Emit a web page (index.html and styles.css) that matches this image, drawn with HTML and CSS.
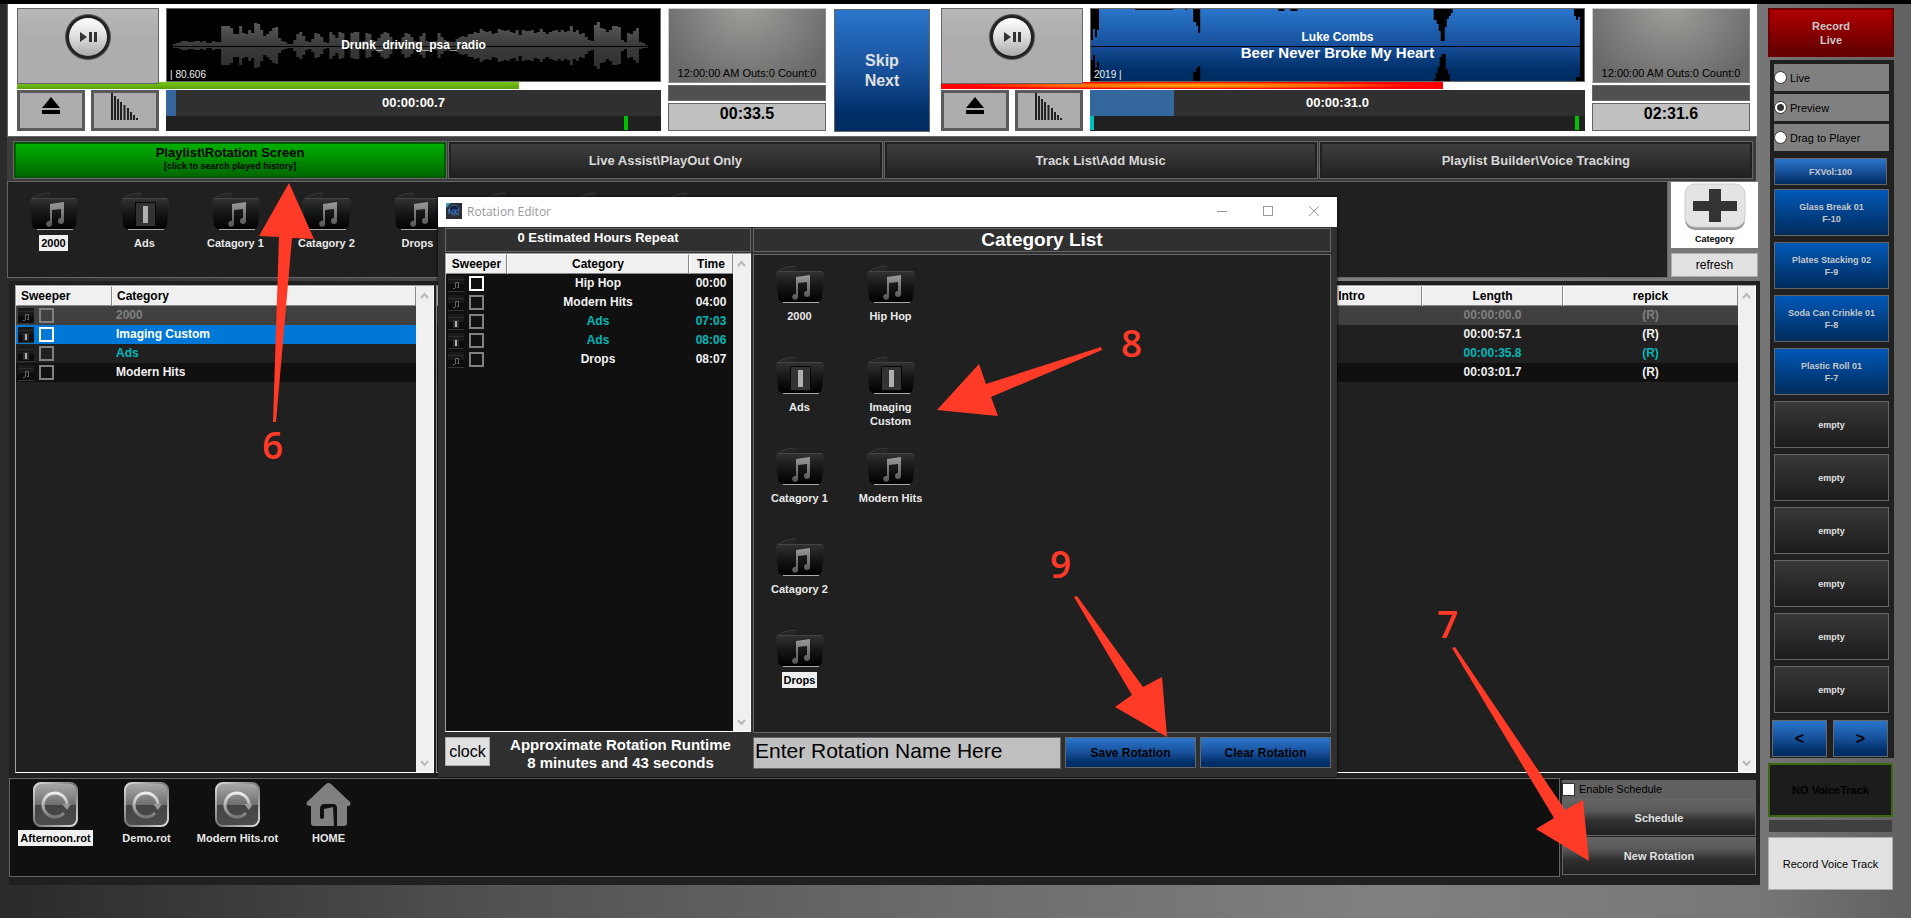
FILE: index.html
```html
<!DOCTYPE html>
<html lang="en">
<head>
  <meta charset="UTF-8" />
  <meta name="viewport" content="width=device-width, initial-scale=1.0"/>
  <title>Radio Automation</title>
  <link rel="stylesheet" href="styles.css">
</head>
<body>
  <!-- shared icons -->
  <svg class="defs" width="0" height="0">
    <defs>
      <linearGradient id="gFolder" x1="0" y1="0" x2="0" y2="1">
        <stop offset="0" stop-color="#333"/><stop offset=".45" stop-color="#17181a"/><stop offset="1" stop-color="#000"/>
      </linearGradient>
      <linearGradient id="gNote" x1="0" y1="0" x2="0" y2="1">
        <stop offset="0" stop-color="#999"/><stop offset="1" stop-color="#555"/>
      </linearGradient>
      <linearGradient id="gKnob" x1="0" y1="0" x2="0" y2="1">
        <stop offset="0" stop-color="#fff"/><stop offset=".5" stop-color="#ddd"/><stop offset="1" stop-color="#aaa"/>
      </linearGradient>
      <linearGradient id="gTile" x1="0" y1="0" x2="0" y2="1">
        <stop offset="0" stop-color="#aaa"/><stop offset=".5" stop-color="#707070"/><stop offset=".52" stop-color="#444"/><stop offset="1" stop-color="#4c4c4c"/>
      </linearGradient>
      <linearGradient id="gRim" x1="0" y1="0" x2="1" y2="1">
        <stop offset="0" stop-color="#ddd"/><stop offset=".5" stop-color="#777"/><stop offset="1" stop-color="#ddd"/>
      </linearGradient>
      <linearGradient id="gArc" x1="0" y1="0" x2="0" y2="1">
        <stop offset="0" stop-color="#eee"/><stop offset="1" stop-color="#777"/>
      </linearGradient>
      <linearGradient id="gBlue" x1="0" y1="0" x2="0" y2="1">
        <stop offset="0" stop-color="#2a76cc"/><stop offset=".5" stop-color="#17509a"/><stop offset=".85" stop-color="#002f68"/><stop offset="1" stop-color="#002c60"/>
      </linearGradient>
      <linearGradient id="gWave" x1="0" y1="0" x2="0" y2="1">
        <stop offset="0" stop-color="#5c5c5c"/><stop offset=".5" stop-color="#3a3a3a"/><stop offset="1" stop-color="#303030"/>
      </linearGradient>
    </defs>
    <symbol id="folder" viewBox="0 0 48 40">
      <path d="M1 9Q6 3 18 2L21 2L20 6L46 6L46 10L1 12Z" fill="#262626"/>
      <path d="M1 7Q7 2 19 1L20 2" fill="none" stroke="#3c3c3c"/>
      <path d="M0 10Q0 6 4 6L44 6Q48 6 48 10L46 33Q45 37 41 37L7 37Q3 37 2 33Z" fill="url(#gFolder)"/>
      <path d="M2 6.500L46 6.500" stroke="#444"/>
      <path d="M7 37.500L43 37.500" stroke="#aaa"/>
    </symbol>
    <symbol id="music" viewBox="0 0 48 40">
      <use href="#folder"/>
      <path d="M20 12L34 10L34 29A3 3 0 1 1 31 26L31 17L22 18L22 31A3 3 0 1 1 20 29Z" fill="url(#gNote)"/>
    </symbol>
    <symbol id="imaging" viewBox="0 0 48 40">
      <use href="#folder"/>
      <rect x="14.500" y="10.500" width="20" height="24" fill="#333" stroke="#080808"/>
      <rect x="22" y="14" width="5" height="17" fill="#b0b0b0"/>
    </symbol>
    <symbol id="mini-music" viewBox="0 0 16 16">
      <rect width="16" height="16" fill="#1a1a1a"/><rect y="3" width="16" height="1" fill="#2c2c2c"/>
      <rect y="8" width="16" height="7" fill="#0c0c0c"/>
      <path d="M7.500 12V6.500H10.500V11" fill="none" stroke="#666"/><rect x="5" y="12" width="2" height="1" fill="#666"/><rect x="9" y="11" width="2" height="1" fill="#666"/>
      <rect y="15" width="16" height="1" fill="#333"/>
    </symbol>
    <symbol id="mini-imaging" viewBox="0 0 16 16">
      <rect width="16" height="16" fill="#1a1a1a"/><rect y="3" width="16" height="1" fill="#2c2c2c"/>
      <rect y="8" width="16" height="7" fill="#0c0c0c"/>
      <rect x="5" y="6" width="6" height="8" fill="#2c2c2c"/><rect x="7" y="7" width="2" height="6" fill="#aaa"/>
      <rect y="15" width="16" height="1" fill="#333"/>
    </symbol>
    <symbol id="rotate" viewBox="0 0 45 45">
      <rect x="1" y="1" width="43" height="43" rx="7" fill="url(#gTile)" stroke="url(#gRim)" stroke-width="2"/>
      <path d="M31 31A12 12 0 1 1 34 22" fill="none" stroke="url(#gArc)" stroke-width="3"/>
      <path d="M29 22L38 22L34 28Z" fill="#999"/>
    </symbol>
    <symbol id="home" viewBox="0 0 45 45">
      <path d="M22.500 1Q24 1 25 2L44 20Q46 24 41 24L41 41Q41 44 38 44L31 44L31 26Q31 22 27 22L19 22Q14 22 14 27L14 35Q14 37 16 37Q18 37 18 35L18 27L27 25L28 44L8 44Q5 44 5 41L5 24Q-1 24 1 20L20 2Q21 1 22.500 1Z" fill="#808080"/>
    </symbol>
    <symbol id="playpause" viewBox="0 0 48 48">
      <circle cx="24" cy="24" r="23" fill="#555"/>
      <circle cx="24" cy="24" r="22" fill="#222"/>
      <circle cx="24" cy="24" r="19" fill="url(#gKnob)"/>
      <path d="M16 19L23 24L16 29ZM25 19H28V29H25ZM30 19H33V29H30Z" fill="#333"/>
    </symbol>
    <symbol id="eject" viewBox="0 0 20 20">
      <path d="M10 1L19 12H1ZM1 14H19V18H1Z" fill="#000"/>
    </symbol>
    <symbol id="fade" viewBox="0 0 28 28">
      <path d="M1 0V27M4 3V27M7 6V27M10 9V27M13.500 12V27M17 15V27M20 19V27M23 22V27M26 25V27" stroke="#222" stroke-width="2"/>
    </symbol>
    <symbol id="up" viewBox="0 0 9 7"><path d="M1 6L4.500 2L8 6" fill="none" stroke="#b8b8b8" stroke-width="2"/></symbol>
    <symbol id="down" viewBox="0 0 9 7"><path d="M1 1L4.500 5L8 1" fill="none" stroke="#b8b8b8" stroke-width="2"/></symbol>
  </svg>

  <div class="app">
    <main class="main">
      <header class="decks">
        <section class="deck">
          <button class="play" aria-label="Play"><svg width="48" height="48"><use href="#playpause"/></svg></button>
          <div class="wave">
            <svg id="wave1" width="100%" height="72" viewBox="0 0 492 72" preserveAspectRatio="none"></svg>
            <div class="wave-text"><span class="artist">Drunk_driving_psa_radio</span></div>
            <span class="tag">| 80.606</span>
          </div>
          <div class="level green"></div>
          <div class="deck-buttons">
            <button class="small" aria-label="Eject"><svg width="20" height="20"><use href="#eject"/></svg></button>
            <button class="small fade" aria-label="Fade"><svg width="28" height="28"><use href="#fade"/></svg></button>
          </div>
          <div class="progress">
            <div class="position"><div class="fill" style="width: 2%"></div><span>00:00:00.7</span></div>
            <div class="cues"><i class="cue out" style="left: 92.5%"></i></div>
          </div>
          <div class="status">
            <div class="dial">12:00:00 AM Outs:0 Count:0</div>
            <div class="bar"></div>
            <div class="remain">00:33.5</div>
          </div>
        </section>

        <button class="skip">Skip<br>Next</button>

        <section class="deck">
          <button class="play" aria-label="Play"><svg width="48" height="48"><use href="#playpause"/></svg></button>
          <div class="wave">
            <svg width="100%" height="72" viewBox="0 0 492 72" preserveAspectRatio="none">
              <rect width="492" height="72" fill="url(#gBlue)"/>
              <path d="M0 0H8V21H6V28H4V20H2V31H0ZM0 72V51H2V46H4V59H6V53H8V72ZM44 0H82V1H44ZM94 0H96V1H94ZM102 0V13H105V17H107V24H109V0ZM102 72V63H105V59H107V57H109V72ZM187 0H193V2H187ZM199 0H206V2H199ZM342 0V11H345V15H347V22H349V32H353V18H355V10H357V7H359V4H361V0ZM342 72V70H344V64H346V58H348V48H350V45H354V60H356V65H358V72ZM482 0V7H484V11H486V8H488V72H492V0ZM484 72V68H488V72Z" fill="#000"/>
              <path d="M0 37.500H492" stroke="#000"/>
            </svg>
            <div class="wave-text"><span class="artist">Luke Combs</span><span class="song">Beer Never Broke My Heart</span></div>
            <span class="tag">2019 |</span>
          </div>
          <div class="level red"></div>
          <div class="deck-buttons">
            <button class="small" aria-label="Eject"><svg width="20" height="20"><use href="#eject"/></svg></button>
            <button class="small fade" aria-label="Fade"><svg width="28" height="28"><use href="#fade"/></svg></button>
          </div>
          <div class="progress">
            <div class="position"><div class="fill" style="width: 17%"></div><span>00:00:31.0</span></div>
            <div class="cues"><i class="cue in" style="left: 0"></i><i class="cue out" style="left: 98%"></i></div>
          </div>
          <div class="status">
            <div class="dial">12:00:00 AM Outs:0 Count:0</div>
            <div class="bar"></div>
            <div class="remain">02:31.6</div>
          </div>
        </section>
      </header>

      <nav class="tabs">
        <button class="tab active">Playlist\Rotation Screen<small>[click to search played history]</small></button>
        <button class="tab">Live Assist\PlayOut Only</button>
        <button class="tab">Track List\Add Music</button>
        <button class="tab">Playlist Builder\Voice Tracking</button>
      </nav>

      <div class="category-row">
        <div class="category-strip icons">
          <div class="item selected"><svg width="48" height="40"><use href="#music"/></svg><span>2000</span></div>
          <div class="item"><svg width="48" height="40"><use href="#imaging"/></svg><span>Ads</span></div>
          <div class="item"><svg width="48" height="40"><use href="#music"/></svg><span>Catagory 1</span></div>
          <div class="item"><svg width="48" height="40"><use href="#music"/></svg><span>Catagory 2</span></div>
          <div class="item"><svg width="48" height="40"><use href="#music"/></svg><span>Drops</span></div>
          <div class="item"><svg width="48" height="40"><use href="#music"/></svg></div>
          <div class="item"><svg width="48" height="40"><use href="#imaging"/></svg></div>
          <div class="item"><svg width="48" height="40"><use href="#music"/></svg></div>
        </div>
        <div class="category-actions">
          <button class="add-category">
            <svg width="62" height="48" viewBox="0 0 62 48">
              <rect x="1" y="4" width="60" height="43" rx="10" fill="#999"/>
              <rect x="1" y="1" width="60" height="43" rx="10" fill="#e4e4e4" stroke="#ccc"/>
              <path d="M25 6H37V18H53V28H37V39H25V28H9V18H25Z" fill="#333"/>
            </svg>
            Category
          </button>
          <button class="refresh">refresh</button>
        </div>
      </div>

      <div class="workspace">
        <div class="lists">
          <div class="list playlist">
            <table>
              <thead><tr><th class="c-sweep">Sweeper</th><th>Category</th></tr></thead>
              <tbody>
                <tr class="played"><td><svg width="16" height="16"><use href="#mini-music"/></svg><input type="checkbox" aria-label="Sweeper 2000"></td><td>2000</td></tr>
                <tr class="current"><td><svg width="16" height="16"><use href="#mini-imaging"/></svg><input type="checkbox" aria-label="Sweeper Imaging Custom"></td><td>Imaging Custom</td></tr>
                <tr class="ad"><td><svg width="16" height="16"><use href="#mini-imaging"/></svg><input type="checkbox" aria-label="Sweeper Ads"></td><td>Ads</td></tr>
                <tr class="alt"><td><svg width="16" height="16"><use href="#mini-music"/></svg><input type="checkbox" aria-label="Sweeper Modern Hits"></td><td>Modern Hits</td></tr>
              </tbody>
            </table>
            <div class="scroll"><svg width="9" height="7"><use href="#up"/></svg><svg width="9" height="7"><use href="#down"/></svg></div>
          </div>
          <div class="list tracks">
            <table>
              <thead><tr><th>Title</th><th class="c-intro">Intro</th><th class="c-length">Length</th><th class="c-repick">repick</th></tr></thead>
              <tbody>
                <tr class="played"><td></td><td></td><td>00:00:00.0</td><td>(R)</td></tr>
                <tr><td></td><td></td><td>00:00:57.1</td><td>(R)</td></tr>
                <tr class="ad"><td></td><td></td><td>00:00:35.8</td><td>(R)</td></tr>
                <tr class="alt"><td></td><td></td><td>00:03:01.7</td><td>(R)</td></tr>
              </tbody>
            </table>
            <div class="scroll"><svg width="9" height="7"><use href="#up"/></svg><svg width="9" height="7"><use href="#down"/></svg></div>
          </div>
        </div>

        <div class="rotations">
          <div class="rotation-strip icons">
            <div class="item selected"><svg width="45" height="45"><use href="#rotate"/></svg><span>Afternoon.rot</span></div>
            <div class="item"><svg width="45" height="45"><use href="#rotate"/></svg><span>Demo.rot</span></div>
            <div class="item"><svg width="45" height="45"><use href="#rotate"/></svg><span>Modern Hits.rot</span></div>
            <div class="item"><svg width="45" height="45"><use href="#home"/></svg><span>HOME</span></div>
          </div>
          <div class="rotation-actions">
            <label class="enable"><input type="checkbox">Enable Schedule</label>
            <button>Schedule</button>
            <button>New Rotation</button>
          </div>
        </div>
      </div>
    </main>

    <aside class="sidebar">
      <button class="record-live">Record<br>Live</button>
      <div class="fx">
        <label class="mode"><input type="radio" name="mode">Live</label>
        <label class="mode"><input type="radio" name="mode" checked>Preview</label>
        <label class="mode"><input type="radio" name="mode">Drag to Player</label>
        <button class="fxvol">FXVol:100</button>
        <div class="carts">
          <button class="cart loaded">Glass Break 01<br>F-10</button>
          <button class="cart loaded">Plates Stacking 02<br>F-9</button>
          <button class="cart loaded">Soda Can Crinkle 01<br>F-8</button>
          <button class="cart loaded">Plastic Roll 01<br>F-7</button>
          <button class="cart">empty</button>
          <button class="cart">empty</button>
          <button class="cart">empty</button>
          <button class="cart">empty</button>
          <button class="cart">empty</button>
          <button class="cart">empty</button>
        </div>
        <div class="pager"><button>&lt;</button><button>&gt;</button></div>
      </div>
      <button class="no-voice">NO VoiceTrack</button>
      <div class="meter"></div>
      <button class="record-voice">Record Voice Track</button>
    </aside>
  </div>

  <!-- rotation editor window -->
  <section class="window">
    <div class="titlebar">
      <svg width="16" height="16" viewBox="0 0 16 16">
        <rect width="16" height="16" fill="#2a2e34"/><path d="M0 0H5L0 5Z" fill="#3fa0c8"/>
        <circle cx="8" cy="7" r="5" fill="#0c2048" stroke="#4a6a88"/>
        <path d="M3 11V6L7 11V6M9 6V11M13 6L9 9L13 12" fill="none" stroke="#4a80c8"/>
      </svg>
      <h1>Rotation Editor</h1>
      <button aria-label="Minimize"><svg width="12" height="12"><path d="M1 6.500H11" stroke="#999"/></svg></button>
      <button aria-label="Maximize"><svg width="12" height="12"><rect x="1.500" y="1.500" width="9" height="9" fill="none" stroke="#999"/></svg></button>
      <button aria-label="Close"><svg width="12" height="12"><path d="M1 1L11 11M11 1L1 11" stroke="#999"/></svg></button>
    </div>
    <div class="editor">
      <div class="editor-left">
        <h2 class="repeat">0 Estimated Hours Repeat</h2>
        <div class="list rotation">
          <table>
            <thead><tr><th class="c-sweep">Sweeper</th><th>Category</th><th class="c-time">Time</th></tr></thead>
            <tbody>
              <tr><td><svg width="16" height="16"><use href="#mini-music"/></svg><input class="focus" type="checkbox" aria-label="Sweeper Hip Hop"></td><td>Hip Hop</td><td>00:00</td></tr>
              <tr><td><svg width="16" height="16"><use href="#mini-music"/></svg><input type="checkbox" aria-label="Sweeper Modern Hits"></td><td>Modern Hits</td><td>04:00</td></tr>
              <tr class="ad"><td><svg width="16" height="16"><use href="#mini-imaging"/></svg><input type="checkbox" aria-label="Sweeper Ads"></td><td>Ads</td><td>07:03</td></tr>
              <tr class="ad"><td><svg width="16" height="16"><use href="#mini-imaging"/></svg><input type="checkbox" aria-label="Sweeper Ads"></td><td>Ads</td><td>08:06</td></tr>
              <tr><td><svg width="16" height="16"><use href="#mini-music"/></svg><input type="checkbox" aria-label="Sweeper Drops"></td><td>Drops</td><td>08:07</td></tr>
            </tbody>
          </table>
          <div class="scroll"><svg width="9" height="7"><use href="#up"/></svg><svg width="9" height="7"><use href="#down"/></svg></div>
        </div>
        <div class="runtime">
          <button class="clock">clock</button>
          <p>Approximate Rotation Runtime<br>8 minutes and 43 seconds</p>
        </div>
      </div>
      <div class="editor-right">
        <h2 class="list-title">Category List</h2>
        <div class="category-list icons">
          <div class="item"><svg width="48" height="40"><use href="#music"/></svg><span>2000</span></div>
          <div class="item"><svg width="48" height="40"><use href="#imaging"/></svg><span>Ads</span></div>
          <div class="item"><svg width="48" height="40"><use href="#music"/></svg><span>Catagory 1</span></div>
          <div class="item"><svg width="48" height="40"><use href="#music"/></svg><span>Catagory 2</span></div>
          <div class="item selected"><svg width="48" height="40"><use href="#music"/></svg><span>Drops</span></div>
          <div class="item"><svg width="48" height="40"><use href="#music"/></svg><span>Hip Hop</span></div>
          <div class="item"><svg width="48" height="40"><use href="#imaging"/></svg><span>Imaging<br>Custom</span></div>
          <div class="item"><svg width="48" height="40"><use href="#music"/></svg><span>Modern Hits</span></div>
        </div>
        <div class="save-row">
          <input class="name" type="text" value="Enter Rotation Name Here" aria-label="Rotation name">
          <button>Save Rotation</button>
          <button>Clear Rotation</button>
        </div>
      </div>
    </div>
  </section>

  <!-- step markers -->
  <svg class="steps" width="1911" height="914" viewBox="0 4 1911 914">
    <path d="M289 183L259 236L279 237L273 422L276 422L292 238L314 239Z"/>
    <path d="M937 410L979 364L986 384L1101 347L1102 350L991 397L998 416Z"/>
    <path d="M1167 737L1115 707L1132 695L1074 597L1077 596L1143 687L1162 677Z"/>
    <path d="M1589 861L1536 829L1554 818L1452 648L1455 647L1565 810L1583 800Z"/>
    <text x="262" y="459">6</text>
    <text x="1437" y="638">7</text>
    <text x="1121" y="357">8</text>
    <text x="1050" y="578">9</text>
  </svg>

  <script>
    // bar heights, 3px each, starting 6px in
    let peaks = [2,3,4,5,5,4,4,5,5,4,5,3,3,5,4,4,
      20,20,20,18,12,12,20,13,12,16,13,23,22,16,10,12,15,18,19,8,5,4,2,2,
      6,12,14,10,5,4,7,13,12,9,4,3,14,11,8,14,13,4,3,13,14,14,3,5,13,12,6,5,8,12,14,13,9,4,4,4,
      9,13,12,9,5,4,10,13,5,4,4,5,13,9,6,5,4,4,7,9,10,9,12,12,14,13,17,15,14,15,12,13,17,16,
      15,16,14,13,16,11,16,15,15,16,13,14,17,14,12,14,15,16,14,16,14,15,20,14,16,12,13,9,6,5,
      21,24,18,17,14,16,20,20,19,6,4,13,12,15,18,4,3,1];
    let d = '';
    peaks.forEach((p, i) => {
      let x = 6 + i * 3;
      d += `M${x} ${37 - p}h3v${p}h-3zM${x} 38h3v${Math.max(1, p - 2)}h-3z`;
    });
    document.getElementById('wave1').innerHTML = `<path d="${d}" fill="url(#gWave)"/>`;
  </script>
</body>
</html>
```
FILE: styles.css
```css
* {
  box-sizing: border-box;
}

body {
  margin: 0;
  min-height: 100vh;
  position: relative;
  border-top: 4px solid #000;
  background: linear-gradient(90deg, #2a2a2a 0, #303030 4%, #3e3e3e 14%, #505050 25%, #6c6c6c 50%, #808080 72%, #777 92%, #606060 100%);
  font-family: "Liberation Sans", Arial, sans-serif;
  font-size: 12px;
  color: #000;
}

button {
  margin: 0;
  padding: 0;
  border: 1px solid #666;
  font-family: inherit;
  font-weight: bold;
}

svg {
  display: block;
}

.defs {
  position: absolute;
}

.app {
  display: flex;
  gap: 8px;
  min-height: calc(100vh - 4px);
  padding: 0 17px 0 7px;
}

.main {
  flex: 1;
  min-width: 0;
  display: flex;
  flex-direction: column;
  padding-bottom: 33px;
}

/* players */
.decks {
  display: flex;
  margin-right: 3px;
  padding: 4px 7px 4px 9px;
  background: #fff;
  border: 1px solid #666;
  border-width: 0 0 1px 1px;
}

.deck {
  flex: 1;
  display: grid;
  grid-template-columns: 142px 1fr 158px;
  grid-template-rows: 74px 8px 42px;
  column-gap: 7px;
}

.play {
  height: 76px;
  padding: 4px 0 0;
  display: flex;
  justify-content: center;
  background: linear-gradient(#b8b8b8, #aeacae 40%);
  z-index: 1;
}

.wave {
  position: relative;
  background: #000;
  border: 1px solid #666;
}

.wave-text {
  position: absolute;
  inset: 0;
  display: flex;
  flex-direction: column;
  align-items: center;
  justify-content: center;
  color: #fff;
  font-weight: bold;
}

.artist {
  font-size: 12px;
  line-height: 16px;
}

.song {
  font-size: 15px;
  line-height: 16px;
}

.tag {
  position: absolute;
  left: 3px;
  bottom: 1px;
  font-size: 10px;
  color: #eee;
}

.level {
  grid-column: 1 / 3;
  grid-row: 2;
  width: 78%;
  margin-bottom: 1px;
}

.green {
  background: linear-gradient(#7cc818, #58a010);
}

.red {
  background: radial-gradient(ellipse at 50% 50%, #fa0, #f60 40%, #f00 65%);
}

.deck-buttons {
  grid-column: 1;
  grid-row: 3;
  display: flex;
  justify-content: space-between;
}

.small {
  width: 68px;
  height: 41px;
  display: flex;
  justify-content: center;
  align-items: flex-start;
  padding-top: 3px;
  border: 3px solid #5a5a5a;
  background: #aeacae;
}

.fade {
  padding-top: 0;
}

.progress {
  grid-column: 2;
  grid-row: 3;
  height: 41px;
  display: flex;
  flex-direction: column;
  background: #202020;
}

.position {
  position: relative;
  height: 26px;
  background: #303030;
  color: #fff;
  font-size: 13px;
  font-weight: bold;
  line-height: 26px;
  text-align: center;
}

.position span {
  position: relative;
}

.fill {
  position: absolute;
  left: 0;
  top: 0;
  height: 100%;
  background: #34689c;
}

.cues {
  flex: 1;
  position: relative;
}

.cue {
  position: absolute;
  top: 0;
  width: 4px;
  height: 14px;
}

.out {
  background: #00c000;
}

.in {
  background: #00c0c0;
}

.status {
  grid-column: 3;
  grid-row: 1 / 4;
  display: flex;
  flex-direction: column;
  gap: 2px;
}

.dial {
  height: 75px;
  padding-bottom: 3px;
  display: flex;
  align-items: flex-end;
  justify-content: center;
  background: radial-gradient(circle at 50% -10%, #a0a09c, #686868 85%);
  border: 1px solid #ccc;
  border-color: #ccc #888 #888 #ccc;
  font-size: 11px;
}

.bar {
  height: 16px;
  background: #505050;
  border: 1px solid #666;
}

.remain {
  height: 28px;
  background: #c0c0c0;
  border: 1px solid #666;
  font-size: 16px;
  font-weight: bold;
  line-height: 20px;
  text-align: center;
}

.skip {
  width: 96px;
  margin: 1px 11px 0 8px;
  color: #e0e0e0;
  font-size: 16px;
  line-height: 20px;
  background: linear-gradient(#2a76cc, #17509a 50%, #002f68 85%, #002c60);
}

/* screen tabs */
.tabs {
  display: flex;
  gap: 1px;
  margin-right: 4px;
  padding: 4px 3px 2px 6px;
  background: #3c3c3c;
}

.tab {
  flex: 1;
  height: 38px;
  color: #d8d8d8;
  font-size: 13px;
  background: linear-gradient(#404040, #202020);
  box-shadow: inset 0 0 0 2px #202020;
}

.tab.active {
  padding-bottom: 3px;
  color: #000;
  line-height: 14px;
  background: linear-gradient(#00b400, #006400);
  box-shadow: inset 0 0 0 2px #005800;
}

.tab small {
  display: block;
  font-size: 9px;
  line-height: 12px;
}

/* icon views */
.icons {
  color: #e8e8e8;
  font-size: 11px;
  font-weight: bold;
  line-height: 14px;
}

.item {
  width: 91px;
  flex: none;
  display: flex;
  flex-direction: column;
  align-items: center;
  gap: 3px;
  text-align: center;
}

.item span {
  padding: 1px 2px;
  white-space: nowrap;
}

.selected span {
  background: #f0f0f0;
  color: #000;
}

.category-row {
  display: flex;
  gap: 3px;
  height: 97px;
}

.category-strip {
  flex: 1;
  min-width: 0;
  display: flex;
  overflow: hidden;
  padding: 10px 0 0;
  background: #202020;
  border: 1px solid #666;
}

.category-actions {
  width: 87px;
  margin-right: 2px;
  display: flex;
  flex-direction: column;
  gap: 5px;
  padding-top: 1px;
}

.add-category {
  height: 66px;
  display: flex;
  flex-direction: column;
  align-items: center;
  gap: 3px;
  padding-top: 1px;
  border: none;
  background: #fff;
  font-size: 9px;
}

.refresh {
  height: 24px;
  background: #e1e1e1;
  border-color: #adadad;
  font-size: 12px;
  font-weight: normal;
}

/* lists */
.workspace {
  flex: 1;
  display: flex;
  flex-direction: column;
  gap: 5px;
  margin: 3px 0 0 2px;
  padding: 4px 4px 8px 0;
  background: #202020;
}

.lists {
  flex: 1;
  display: flex;
  gap: 2px;
  padding-left: 6px;
}

.list {
  display: flex;
  align-items: stretch;
  border: 1px solid #fff;
  border-color: #a0a0a0 #fff #fff #a0a0a0;
}

.playlist {
  width: 419px;
}

.tracks {
  flex: 1;
}

.list table {
  flex: 1;
  align-self: flex-start;
  border-collapse: separate;
  border-spacing: 0;
  table-layout: fixed;
  width: 100%;
  font-size: 12px;
  font-weight: bold;
  color: #f0f0f0;
}

.list th {
  height: 20px;
  padding: 0 4px;
  background: #f0f0f0;
  color: #000;
  border: 1px solid #fff;
  border-right-color: #888;
  border-bottom-color: #888;
  line-height: 17px;
}

.list td {
  height: 19px;
  padding: 0;
  line-height: 19px;
  text-align: center;
}

.playlist th,
.playlist td {
  text-align: left;
  padding-left: 4px;
}

.playlist td:first-child,
.rotation td:first-child {
  display: flex;
  align-items: center;
  gap: 5px;
  padding-left: 2px;
}

.playlist .c-sweep {
  width: 96px;
}

.rotation .c-sweep {
  width: 61px;
}

.c-time {
  width: 44px;
}

.c-intro,
.c-length {
  width: 141px;
}

.c-repick {
  width: 175px;
}

.list input {
  appearance: none;
  width: 15px;
  height: 15px;
  margin: 0;
  border: 2px solid #808080;
}

.list .focus,
.current input {
  border-color: #fff;
}

.list .played {
  background: #404040;
  color: #808080;
}

.list .current {
  background: #0078d7;
  color: #fff;
}

.list .ad {
  color: #00b8b8;
}

.list .alt {
  background: #101010;
}

.scroll {
  width: 17px;
  flex: none;
  display: flex;
  flex-direction: column;
  align-items: center;
  justify-content: space-between;
  padding: 6px 0 5px;
  background: #f0f0f0;
}

/* rotations */
.rotations {
  display: flex;
  gap: 2px;
  height: 99px;
}

.rotation-strip {
  flex: 1;
  display: flex;
  padding-top: 3px;
  background: #101010;
  border: 1px solid #666;
}

.rotation-actions {
  width: 194px;
  display: flex;
  flex-direction: column;
  padding: 2px 0 1px;
}

.enable {
  height: 19px;
  display: flex;
  align-items: center;
  gap: 4px;
  background: #606060;
  font-size: 11px;
}

.enable input {
  appearance: none;
  width: 13px;
  height: 13px;
  margin: 0;
  background: #fff;
  border: 1px solid #333;
}

.rotation-actions button {
  height: 38px;
  margin-bottom: 1px;
  color: #e0e0e0;
  font-size: 11px;
  background: linear-gradient(#646464, #5a5a5a 30%, #303030 60%, #202020);
}

/* right side */
.sidebar {
  width: 126px;
  display: flex;
  flex-direction: column;
  padding-top: 4px;
}

.record-live {
  height: 49px;
  border: 2px solid #6c0000;
  background: linear-gradient(#b00000, #600000);
  color: #c8c8c8;
  font-size: 11px;
  line-height: 14px;
}

.fx {
  margin: 3px 0 5px 2px;
  padding: 4px 5px 1px 4px;
  display: flex;
  flex-direction: column;
  gap: 3px;
  background: #202020;
}

.mode {
  height: 27px;
  display: flex;
  align-items: center;
  gap: 3px;
  background: #808080;
  font-size: 11px;
}

.mode input {
  appearance: none;
  width: 13px;
  height: 13px;
  margin: 0;
  background: #fff;
  border: 1px solid #333;
  border-radius: 50%;
}

.mode input:checked {
  background: radial-gradient(circle, #333 0 3px, #fff 4px);
}

.fxvol {
  height: 27px;
  margin: 4px 2px 1px 0;
  color: #c8c8c8;
  font-size: 9px;
  background: linear-gradient(#2a76cc, #17509a 50%, #002c60);
}

.carts {
  display: flex;
  flex-direction: column;
  gap: 6px;
}

.cart {
  height: 47px;
  color: #e0e0e0;
  font-size: 9px;
  line-height: 12px;
  background: linear-gradient(#383838, #1c1c1c);
}

.loaded {
  color: #c8c8c8;
  background: linear-gradient(#0058b8, #002c5c);
}

.pager {
  display: flex;
  gap: 6px;
  margin: 4px 1px 0 -2px;
}

.pager button {
  flex: 1;
  height: 37px;
  font-size: 16px;
  background: linear-gradient(#2a76cc, #17509a 50%, #002f68 85%, #002c60);
}

.no-voice {
  height: 54px;
  margin-right: 1px;
  border: 2px solid #3c6814;
  background: #1c1c1c;
  font-size: 11px;
}

.meter {
  height: 12px;
  margin: 3px 2px 5px 1px;
  background: #404040;
}

.record-voice {
  height: 53px;
  margin-right: 1px;
  border-color: #adadad;
  background: #e1e1e1;
  font-size: 11px;
  font-weight: normal;
}

/* rotation editor */
.window {
  position: absolute;
  left: 438px;
  top: 193px;
  width: 899px;
  height: 580px;
  display: flex;
  flex-direction: column;
  background: #303030;
  box-shadow: 0 0 3px #000;
}

.titlebar {
  height: 30px;
  display: flex;
  align-items: center;
  padding: 0 0 2px 8px;
  background: #fff;
}

.titlebar h1 {
  flex: 1;
  margin: 0 0 0 5px;
  font-family: "Open Sans", sans-serif;
  font-size: 12px;
  font-weight: normal;
  color: #999;
}

.titlebar button {
  width: 46px;
  height: 28px;
  display: flex;
  align-items: center;
  justify-content: center;
  background: none;
  border: none;
}

.editor {
  flex: 1;
  display: flex;
  gap: 2px;
  padding: 1px 6px 8px 7px;
}

.editor-left {
  width: 306px;
  display: flex;
  flex-direction: column;
}

.editor-right {
  flex: 1;
  display: flex;
  flex-direction: column;
}

.editor h2 {
  height: 24px;
  margin: 0 0 1px;
  border: 1px solid #666;
  color: #fff;
  text-align: center;
}

.repeat {
  font-size: 13px;
  line-height: 18px;
}

.list-title {
  font-size: 19px;
  line-height: 22px;
}

.rotation {
  flex: 1;
  background: #101010;
}

.runtime {
  height: 37px;
  display: flex;
  align-items: flex-start;
}

.clock {
  width: 45px;
  height: 29px;
  margin-top: 5px;
  border-color: #adadad;
  background: #e1e1e1;
  font-size: 16px;
  font-weight: normal;
}

.runtime p {
  flex: 1;
  margin: 4px 0 0;
  color: #fff;
  font-size: 15px;
  font-weight: bold;
  line-height: 18px;
  text-align: center;
}

.category-list {
  flex: 1;
  display: grid;
  grid-template-rows: repeat(5, 91px);
  grid-auto-flow: column;
  grid-auto-columns: 91px;
  margin-top: 1px;
  padding-top: 10px;
  background: #202020;
  border: 1px solid #666;
}

.save-row {
  display: flex;
  gap: 4px;
  margin-top: 4px;
}

.save-row .name {
  flex: 1;
  min-width: 0;
  height: 32px;
  padding: 0 1px 4px;
  border: 1px solid #666;
  background: #c0c0c0;
  font-family: inherit;
  font-size: 21px;
  color: #000;
}

.save-row button {
  width: 131px;
  height: 31px;
  font-size: 12px;
  background: linear-gradient(#2a76cc, #17509a 50%, #002f68 85%, #002c60);
}

/* step markers */
.steps {
  position: absolute;
  left: 0;
  top: 0;
  pointer-events: none;
  fill: #ff3b28;
  font-family: "Open Sans", sans-serif;
  font-size: 37px;
  font-weight: 600;
}
```
